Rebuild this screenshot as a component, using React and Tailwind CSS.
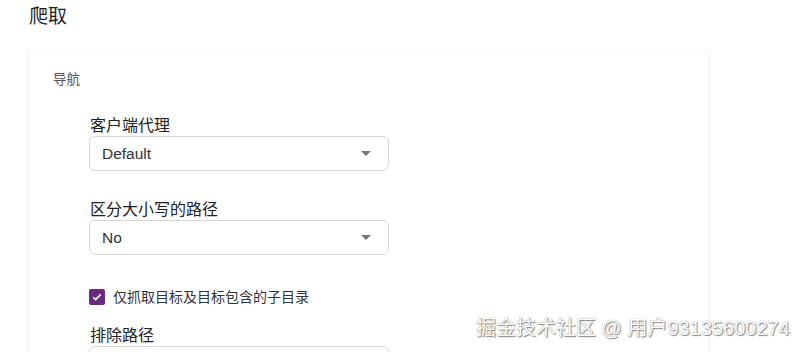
const FONT = 'font-[Roboto,"Noto_Sans_CJK_SC",sans-serif]'

function Select({ value }) {
  return (
    <div className="flex h-[35px] w-[300px] items-center justify-between rounded-[6px] border border-[#d6d6d6] bg-white pl-[12px] pr-[17px]">
      <span className="font-['Liberation_Sans','Noto_Sans_CJK_SC',sans-serif] text-[15.5px] text-[#333]">{value}</span>
      <svg width="10" height="5" viewBox="0 0 10 5">
        <path d="M0 0h10L5 5z" fill="#777" />
      </svg>
    </div>
  )
}

function Field({ label, value, className = '' }) {
  return (
    <div className={className}>
      <div className="text-[16px] leading-[20px] text-[#222] pl-[1px]">{label}</div>
      <Select value={value} />
    </div>
  )
}

export default function App() {
  return (
    <div className={`relative h-[352px] w-[800px] overflow-hidden bg-white ${FONT}`}>
      {/* 标题 */}
      <div className="pl-[29px] pt-[3px] text-[19px] leading-[28px] text-[#1f1f1f]">爬取</div>

      {/* 卡片 */}
      <div className="ml-[29px] mt-[18px] w-[680px] h-[400px] bg-white shadow-[0_1px_3px_rgba(0,0,0,0.13)] pl-[24px] pt-[20px]">
        <div className="text-[13.5px] leading-[20px] text-[#555]">导航</div>

        <div className="ml-[36px]">
          <Field label="客户端代理" value="Default" className="mt-[27px]" />
          <Field label="区分大小写的路径" value="No" className="mt-[29px]" />

          <div className="mt-[34px] flex items-center gap-[8px]">
            <div className="flex h-[16px] w-[16px] items-center justify-center rounded-[2px] bg-[#6a2a80]">
              <svg width="12" height="12" viewBox="0 0 12 12">
                <path d="M2.2 6.2l2.4 2.4 5.2-5.2" fill="none" stroke="white" strokeWidth="1.6" />
              </svg>
            </div>
            <span className="text-[14px] leading-[16px] text-[#333]">仅抓取目标及目标包含的子目录</span>
          </div>

          <Field label="排除路径" value="" className="mt-[21px]" />
        </div>
      </div>

      {/* 水印 */}
      <div className="absolute left-[476px] top-[316px] font-['Liberation_Sans','Noto_Sans_CJK_SC',sans-serif] text-[20px] leading-[24px] text-white [text-shadow:0_0_1px_#777,1px_1px_1px_#888]">
        掘金技术社区 @ 用户93135600274
      </div>
    </div>
  )
}
